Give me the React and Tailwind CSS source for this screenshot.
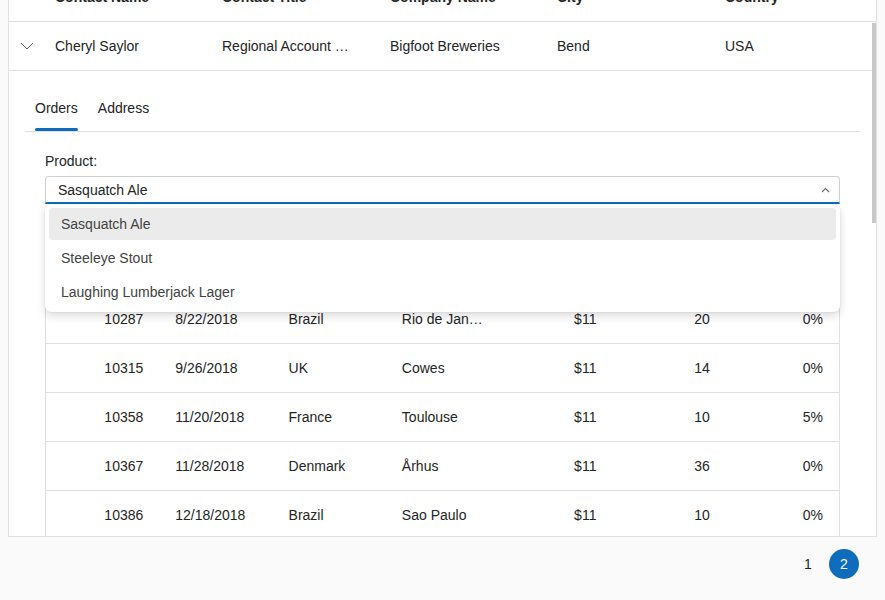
import React from "react";

const orders = [
  ["10287", "8/22/2018", "Brazil", "Rio de Janeiro", "$11", "20", "0%"],
  ["10315", "9/26/2018", "UK", "Cowes", "$11", "14", "0%"],
  ["10358", "11/20/2018", "France", "Toulouse", "$11", "10", "5%"],
  ["10367", "11/28/2018", "Denmark", "Århus", "$11", "36", "0%"],
  ["10386", "12/18/2018", "Brazil", "Sao Paulo", "$11", "10", "0%"],
];

const products = ["Sasquatch Ale", "Steeleye Stout", "Laughing Lumberjack Lager"];

// alignment per column of the orders table
const align = ["text-right", "text-left", "text-left", "text-left", "text-right", "text-right", "text-right"];

function ChevronDown() {
  return (
    <svg width="14" height="8" viewBox="0 0 14 8" fill="none">
      <path d="M1 1l6 6 6-6" stroke="#616161" strokeWidth="1" />
    </svg>
  );
}

function ChevronUp() {
  return (
    <svg width="9" height="6" viewBox="0 0 9 6" fill="none">
      <path d="M1 5l3.5-3.5L8 5" stroke="#707070" strokeWidth="1.2" />
    </svg>
  );
}

function App() {
  return (
    <div className="h-[600px] overflow-hidden bg-[#fafafa] font-['Liberation_Sans',_Arial,_sans-serif] text-sm text-[#242424]">
      {/* master grid */}
      <div className="-mt-[28px] ml-2 flex h-[565px] w-[869px] flex-col overflow-hidden border border-[#e0e0e0] bg-white">
        <div className="grid h-[49px] shrink-0 grid-cols-[36px_167px_168px_167px_168px_1fr] items-center border-b border-[#e0e0e0] font-bold leading-5">
          <div />
          <div className="pl-[10px]">Contact Name</div>
          <div className="pl-[10px]">Contact Title</div>
          <div className="pl-[10px]">Company Name</div>
          <div className="pl-[10px]">City</div>
          <div className="pl-[10px]">Country</div>
        </div>

        <div className="relative flex-1 overflow-hidden">
          {/* data row */}
          <div className="grid h-[49px] grid-cols-[36px_167px_168px_167px_168px_1fr] items-center border-b border-[#e0e0e0] leading-5">
            <div className="flex justify-center">
              <ChevronDown />
            </div>
            <div className="truncate pl-[10px]">Cheryl Saylor</div>
            <div className="truncate pl-[10px] pr-[28px]">Regional Account Manager</div>
            <div className="truncate pl-[10px]">Bigfoot Breweries</div>
            <div className="truncate pl-[10px]">Bend</div>
            <div className="truncate pl-[10px]">USA</div>
          </div>

          {/* detail row */}
          <div className="px-4 pt-5">
            <div className="flex border-b border-[#e0e0e0]">
              <div className="flex flex-col px-[10px] pt-[7px]">
                <span className="leading-5">Orders</span>
                <span className="mt-[10px] h-[3px] rounded-sm bg-[#0f6cbd]" />
              </div>
              <div className="flex flex-col px-[10px] pt-[7px]">
                <span className="leading-5">Address</span>
                <span className="mt-[10px] h-[3px]" />
              </div>
            </div>

            <div className="px-5 pt-[19px]">
              <div className="leading-5">Product:</div>
              <div className="relative mt-[5px]">
                <div className="flex h-[28px] items-center rounded-t-[4px] border border-b-2 border-[#d1d1d1] border-b-[#0f6cbd] pl-3">
                  <span className="flex-1 leading-5">Sasquatch Ale</span>
                  <span className="flex w-[28px] justify-center">
                    <ChevronUp />
                  </span>
                </div>

                {/* open popup */}
                <div className="absolute left-0 right-0 top-full z-10 flex flex-col gap-[2px] rounded-[6px] bg-white p-1 shadow-[0_4px_10px_rgba(0,0,0,0.14),0_0_2px_rgba(0,0,0,0.12)]">
                  {products.map((p, i) => (
                    <div
                      key={p}
                      className={
                        i === 0
                          ? "flex h-[32px] items-center rounded-[4px] bg-[#ebebeb] px-3 text-[#424242]"
                          : "flex h-[32px] items-center rounded-[4px] px-3 text-[#424242]"
                      }
                    >
                      {p}
                    </div>
                  ))}
                </div>
              </div>

              {/* orders table */}
              <div className="mt-[41px] border border-[#e0e0e0]">
                <div className="grid h-[49px] grid-cols-7 items-center border-b border-[#e0e0e0] font-bold">
                  {["Order ID", "Order Date", "Ship Country", "Ship City", "Unit Price", "Quantity", "Discount"].map((h, i) => (
                    <div key={h} className={`truncate px-4 ${align[i]}`}>
                      {h}
                    </div>
                  ))}
                </div>
                {orders.map((row) => (
                  <div key={row[0]} className="grid h-[49px] grid-cols-7 items-center border-b border-[#e0e0e0] leading-5">
                    {row.map((c, i) => (
                      <div key={i} className={`truncate px-4 ${align[i]}`}>
                        {c}
                      </div>
                    ))}
                  </div>
                ))}
              </div>
            </div>
          </div>

          {/* vertical scrollbar thumb */}
          <div className="absolute right-0 top-[1px] h-[200px] w-1 bg-[#c8c8c8]" />
        </div>
      </div>

      {/* pager */}
      <div className="flex items-center justify-end gap-[6px] pr-[26px] pt-3">
        <button className="flex h-[30px] w-[30px] items-center justify-center rounded-full text-sm text-[#242424]">1</button>
        <button className="flex h-[30px] w-[30px] items-center justify-center rounded-full bg-[#0f6cbd] text-sm text-white">2</button>
      </div>
    </div>
  );
}

export default App;
